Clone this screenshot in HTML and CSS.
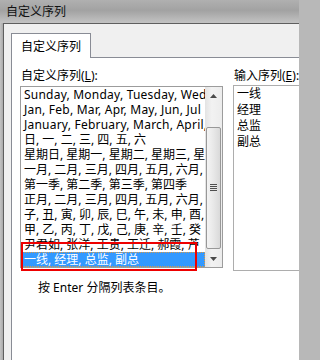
FILE: index.html
```html
<!DOCTYPE html>
<html lang="zh-CN">
<head>
<meta charset="utf-8">
<title>自定义序列</title>
<link rel="stylesheet" href="styles.css">
</head>
<body>
<div class="window">
  <div class="titlebar"><span class="title">自定义序列</span></div>
  <div class="client">
    <div class="tabs"><div class="tab">自定义序列</div></div>
    <div class="panel">
      <div class="col left">
        <div class="label">自定义序列(<u>L</u>):</div>
        <div class="listbox">
          <div class="items">
            <div class="item latin">Sunday, Monday, Tuesday, Wednes</div>
            <div class="item latin">Jan, Feb, Mar, Apr, May, Jun, Jul</div>
            <div class="item latin">January, February, March, April, M</div>
            <div class="item">日, 一, 二, 三, 四, 五, 六</div>
            <div class="item">星期日, 星期一, 星期二, 星期三, 星期</div>
            <div class="item">一月, 二月, 三月, 四月, 五月, 六月, 七</div>
            <div class="item">第一季, 第二季, 第三季, 第四季</div>
            <div class="item">正月, 二月, 三月, 四月, 五月, 六月, 七</div>
            <div class="item">子, 丑, 寅, 卯, 辰, 巳, 午, 未, 申, 酉, 戌</div>
            <div class="item">甲, 乙, 丙, 丁, 戊, 己, 庚, 辛, 壬, 癸</div>
            <div class="item">尹君如, 张洋, 王贵, 王迁, 郝霞, 芦</div>
            <div class="item selected">一线, 经理, 总监, 副总</div>
          </div>
          <div class="scrollbar">
            <div class="sb-btn"><svg width="7" height="4" viewBox="0 0 7 4"><polygon points="0,4 7,4 3.5,0" fill="#4a4a4a"/></svg></div>
            <div class="sb-track"><div class="sb-thumb"><div class="grip"></div></div></div>
            <div class="sb-btn"><svg width="7" height="4" viewBox="0 0 7 4"><polygon points="0,0 7,0 3.5,4" fill="#4a4a4a"/></svg></div>
          </div>
          <div class="annot"></div>
        </div>
        <div class="hint">按 Enter 分隔列表条目。</div>
      </div>
      <div class="col right">
        <div class="label">输入序列(<u>E</u>):</div>
        <div class="editbox">
          <div class="line">一线</div>
          <div class="line">经理</div>
          <div class="line">总监</div>
          <div class="line">副总</div>
        </div>
      </div>
    </div>
  </div>
</div>
</body>
</html>
```

FILE: styles.css
```css
* { box-sizing: border-box; }
html, body { margin: 0; padding: 0; }
body {
  width: 299px;
  height: 360px;
  overflow: hidden;
  font-family: "Noto Sans", "Noto Sans CJK SC", sans-serif;
  font-size: 12px;
  color: #000;
  background: #b8b8b8;
}
.window {
  height: 360px;
  display: flex;
  flex-direction: column;
  background: linear-gradient(90deg, #c4c4c4, #aaaaaa 3px);
}
.titlebar {
  height: 23px;
  padding-left: 6px;
  line-height: 21px;
  background: linear-gradient(180deg, #b0b0b0 0%, #a2a2a2 45%, #c3c3c3 100%);
  white-space: nowrap;
}
.title { font-family: "Noto Sans CJK SC", sans-serif; font-size: 12px; color: #111; }
.client {
  flex: 1;
  margin-left: 3px;
  border-top: 1px solid #5f5f5f;
  border-left: 1px solid #5f5f5f;
  background: #f0f0f0;
  padding: 9px 0 0 7px;
  display: flex;
  flex-direction: column;
}
.tabs { display: flex; }
.tab {
  width: 80px;
  height: 25px;
  border: 1px solid #898c95;
  border-bottom: none;
  background: #fff;
  padding-left: 9px;
  line-height: 23px;
  margin-bottom: -1px;
  position: relative;
  z-index: 1;
  font-family: "Noto Sans CJK SC", sans-serif;
}
.panel {
  flex: 1;
  border-top: 1px solid #898c95;
  border-left: 1px solid #898c95;
  background: #fff;
  padding: 10px 0 0 8px;
  display: flex;
  gap: 10px;
  min-width: 0;
}
.col { display: flex; flex-direction: column; flex: none; }
.left { width: 203px; }
.right { width: 66px; }
.label {
  line-height: 15px;
  height: 15px;
  margin-bottom: 3px;
  padding-left: 1px;
  white-space: nowrap;
}
.label u { text-decoration: underline; text-underline-offset: 1px; }
.listbox {
  position: relative;
  height: 182px;
  border: 1px solid #9c9c9c;
  display: flex;
}
.items {
  flex: 1;
  min-width: 0;
  overflow: hidden;
}
.item {
  height: 15px;
  line-height: 15px;
  padding-left: 3px;
  white-space: nowrap;
  overflow: hidden;
}
.item.latin { letter-spacing: 0.22px; }
.item.selected {
  background: #3399ff;
  color: #fff;
  outline: 1px dotted #d89a4a;
  outline-offset: -1px;
}
.scrollbar {
  width: 17px;
  flex: none;
  display: flex;
  flex-direction: column;
  background: linear-gradient(90deg, #e3e3e3, #f2f2f2 40%, #ececec);
}
.sb-btn {
  height: 17px;
  display: flex;
  align-items: center;
  justify-content: center;
  flex: none;
}
.sb-track {
  flex: 1;
  padding: 23px 1px 1px 1px;
  display: flex;
  flex-direction: column;
}
.sb-thumb {
  height: 122px;
  border: 1px solid #989898;
  border-radius: 2px;
  background: linear-gradient(90deg, #f4f4f4, #e8e8e8 50%, #d9d9d9);
  display: flex;
  align-items: center;
  justify-content: center;
}
.grip {
  width: 7px;
  height: 8px;
  background: repeating-linear-gradient(180deg, #4f4f4f 0 1px, #e8e8e8 1px 2px);
}
.annot {
  position: absolute;
  left: 0;
  top: 155px;
  width: 176px;
  height: 29px;
  border: 2px solid #ee0000;
}
.hint {
  margin-top: 12px;
  padding-left: 18px;
  line-height: 15px;
  white-space: nowrap;
}
.editbox {
  margin-top: -1px;
  height: 186px;
  border: 1px solid #adadad;
  border-right: none;
  padding-left: 3px;
}
.line { line-height: 16px; height: 16px; white-space: nowrap; }
```
